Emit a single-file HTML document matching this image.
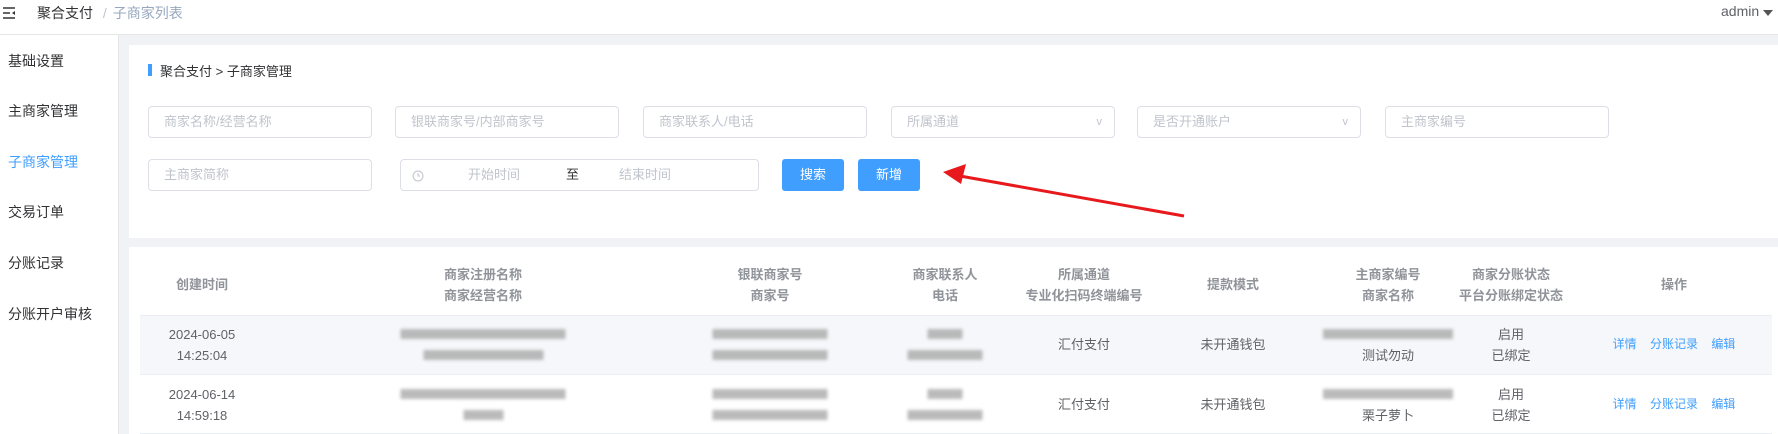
<!DOCTYPE html>
<html><head><meta charset="utf-8"><style>
*{margin:0;padding:0;box-sizing:border-box}
body{width:1778px;height:434px;overflow:hidden;background:#f0f2f5;font-family:"Liberation Sans","Noto Sans CJK SC",sans-serif;font-size:14px;color:#303133;position:relative}
.a{position:absolute}
.hdr{left:0;top:0;width:1778px;height:35px;background:#fff;border-bottom:1px solid #e6e6e6}
.side{left:0;top:35px;width:119px;height:399px;background:#fff;border-right:1px solid #e6e6e6}
.side div{position:absolute;left:8px;font-size:14px;color:#303133}
.p1{left:129px;top:45px;width:1649px;height:193px;background:#fff}
.p2{left:129px;top:247px;width:1649px;height:187px;background:#fff}
.inp{position:absolute;height:32px;border:1px solid #dcdfe6;border-radius:4px;background:#fff;color:#c0c4cc;font-size:13px;line-height:30px;padding-left:15px}
.btn{position:absolute;top:159px;width:62px;height:32px;background:#409eff;color:#fff;border-radius:3px;font-size:13px;text-align:center;line-height:32px}
.c{position:absolute;text-align:center;transform:translateX(-50%);white-space:nowrap;line-height:21px}
.th{color:#909399;font-weight:bold;font-size:13px}
.td{color:#606266;font-size:13px}
.bl{display:inline-block;height:10px;background:#aaa;filter:blur(1.5px);opacity:.8}
.lk{color:#409eff;font-size:12px}
.chev{position:absolute;right:12px;top:0;color:#c0c4cc;font-size:11px}
</style></head><body>
<div class="a hdr"></div>
<svg class="a" style="left:2px;top:6px" width="14" height="14" viewBox="0 0 14 14"><path d="M1 2h12M1 7h7M1 12h12" stroke="#333" stroke-width="1.6"/><path d="M13 5v4l-3-2z" fill="#333"/></svg>
<div class="a" style="left:37px;top:3px;font-size:14px;color:#303133">聚合支付 <span style="color:#c0c4cc;margin:0 6px">/</span><span style="color:#97a8be">子商家列表</span></div>
<div class="a" style="left:1721px;top:3px;font-size:14px;color:#606266">admin</div>
<svg class="a" style="left:1763px;top:10px" width="10" height="7"><path d="M0 0h10L5 6z" fill="#555"/></svg>
<div class="a side">
<div style="top:16px">基础设置</div><div style="top:66px">主商家管理</div><div style="top:117px;color:#409eff">子商家管理</div><div style="top:167px">交易订单</div><div style="top:218px">分账记录</div><div style="top:269px">分账开户审核</div>
</div>
<div class="a p1"></div>
<div class="a" style="left:148px;top:64px;width:4px;height:12px;background:#409eff"></div>
<div class="a" style="left:160px;top:61px;font-size:13px">聚合支付 &gt; 子商家管理</div>
<div class="inp" style="left:148px;top:106px;width:224px">商家名称/经营名称</div>
<div class="inp" style="left:395px;top:106px;width:224px">银联商家号/内部商家号</div>
<div class="inp" style="left:643px;top:106px;width:224px">商家联系人/电话</div>
<div class="inp" style="left:891px;top:106px;width:224px">所属通道<span class="chev">v</span></div>
<div class="inp" style="left:1137px;top:106px;width:224px">是否开通账户<span class="chev">v</span></div>
<div class="inp" style="left:1385px;top:106px;width:224px">主商家编号</div>
<div class="inp" style="left:148px;top:159px;width:224px">主商家简称</div>
<div class="inp" style="left:400px;top:159px;width:359px;padding:0"><svg style="position:absolute;left:11px;top:10px" width="12" height="12"><circle cx="6" cy="6" r="5" fill="none" stroke="#c0c4cc"/><path d="M6 3v3h2" stroke="#c0c4cc" fill="none"/></svg><span style="position:absolute;left:67px">开始时间</span><span style="position:absolute;left:165px;color:#303133">至</span><span style="position:absolute;left:218px">结束时间</span></div>
<div class="btn" style="left:782px">搜索</div>
<div class="btn" style="left:858px">新增</div>
<svg class="a" style="left:930px;top:160px" width="270" height="70"><path d="M254 56L30 16" stroke="#e8191c" stroke-width="3"/><path d="M13 12L36 4L31 24z" fill="#e8191c"/></svg>
<div class="a p2"></div>
<div class="a" style="left:140px;top:315px;width:1632px;height:60px;background:#f5f7fa;border-top:1px solid #ebeef5;border-bottom:1px solid #ebeef5"></div>
<div class="a" style="left:140px;top:433px;width:1632px;height:1px;background:#ebeef5"></div>
<div class="c th" style="left:202px;top:274px">创建时间</div>
<div class="c th" style="left:483px;top:264px">商家注册名称<br>商家经营名称</div>
<div class="c th" style="left:770px;top:264px">银联商家号<br>商家号</div>
<div class="c th" style="left:945px;top:264px">商家联系人<br>电话</div>
<div class="c th" style="left:1084px;top:264px">所属通道<br>专业化扫码终端编号</div>
<div class="c th" style="left:1233px;top:274px">提款模式</div>
<div class="c th" style="left:1388px;top:264px">主商家编号<br>商家名称</div>
<div class="c th" style="left:1511px;top:264px">商家分账状态<br>平台分账绑定状态</div>
<div class="c th" style="left:1674px;top:274px">操作</div>

<div class="c td" style="left:202px;top:324px">2024-06-05<br>14:25:04</div>
<div class="c td" style="left:483px;top:324px"><span class="bl" style="width:165px"></span><br><span class="bl" style="width:120px"></span></div>
<div class="c td" style="left:770px;top:324px"><span class="bl" style="width:115px"></span><br><span class="bl" style="width:115px"></span></div>
<div class="c td" style="left:945px;top:324px"><span class="bl" style="width:35px"></span><br><span class="bl" style="width:75px"></span></div>
<div class="c td" style="left:1084px;top:334px">汇付支付</div>
<div class="c td" style="left:1233px;top:334px">未开通钱包</div>
<div class="c td" style="left:1388px;top:324px"><span class="bl" style="width:130px"></span><br>测试勿动</div>
<div class="c td" style="left:1511px;top:324px">启用<br>已绑定</div>
<div class="c lk" style="left:1674px;top:334px">详情&nbsp;&nbsp;&nbsp;&nbsp;分账记录&nbsp;&nbsp;&nbsp;&nbsp;编辑</div>

<div class="c td" style="left:202px;top:384px">2024-06-14<br>14:59:18</div>
<div class="c td" style="left:483px;top:384px"><span class="bl" style="width:165px"></span><br><span class="bl" style="width:40px"></span></div>
<div class="c td" style="left:770px;top:384px"><span class="bl" style="width:115px"></span><br><span class="bl" style="width:115px"></span></div>
<div class="c td" style="left:945px;top:384px"><span class="bl" style="width:35px"></span><br><span class="bl" style="width:75px"></span></div>
<div class="c td" style="left:1084px;top:394px">汇付支付</div>
<div class="c td" style="left:1233px;top:394px">未开通钱包</div>
<div class="c td" style="left:1388px;top:384px"><span class="bl" style="width:130px"></span><br>栗子萝卜</div>
<div class="c td" style="left:1511px;top:384px">启用<br>已绑定</div>
<div class="c lk" style="left:1674px;top:394px">详情&nbsp;&nbsp;&nbsp;&nbsp;分账记录&nbsp;&nbsp;&nbsp;&nbsp;编辑</div>
</body></html>
